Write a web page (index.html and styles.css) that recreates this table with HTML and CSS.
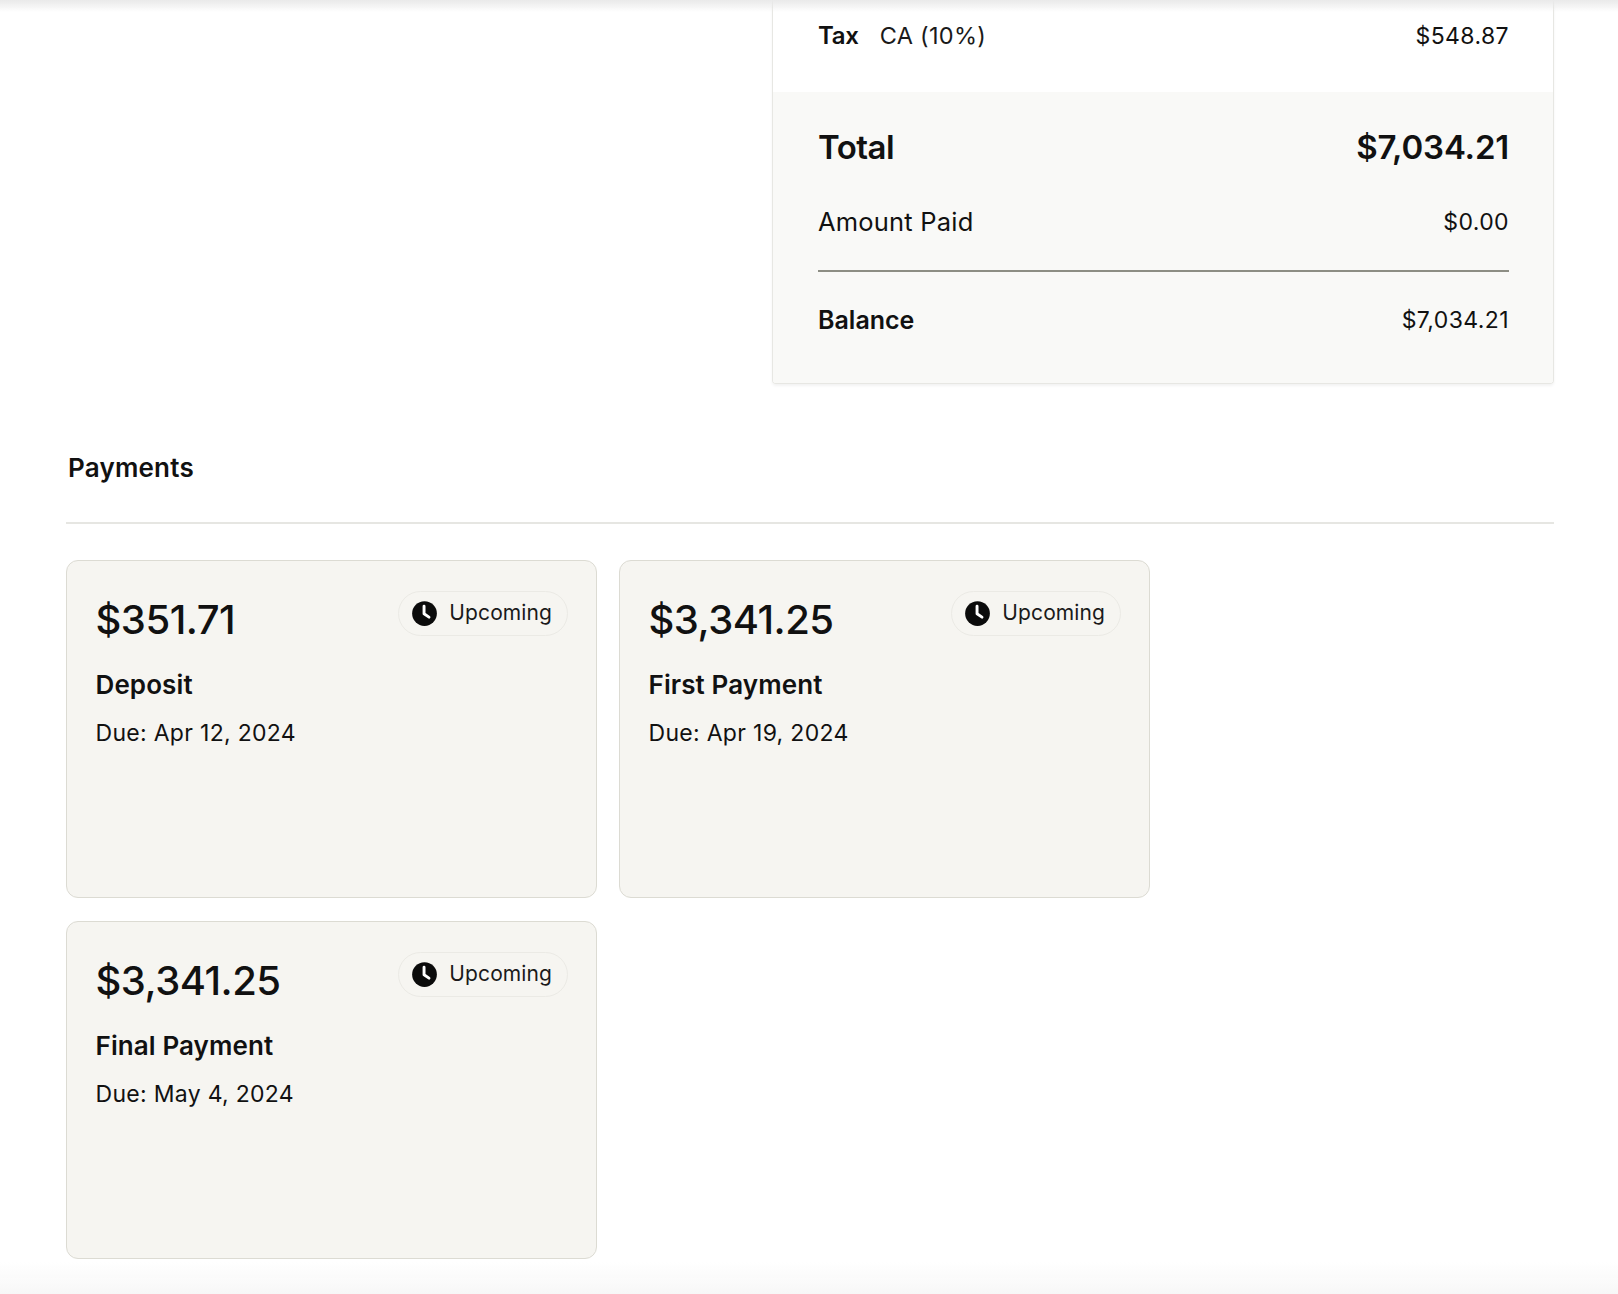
FILE: index.html
```html
<!DOCTYPE html>
<html lang="en">
<head>
<meta charset="utf-8">
<title>Invoice</title>
<link rel="stylesheet" href="styles.css">
</head>
<body>
<div class="top-shade"></div>
<main class="page">
  <section class="summary">
    <div class="summary-top">
      <div class="row">
        <div class="label-group"><span class="label-strong">Tax</span><span class="label-sub">CA (10%)</span></div>
        <span class="value">$548.87</span>
      </div>
    </div>
    <div class="summary-bottom">
      <div class="row total-row">
        <span class="total-label">Total</span>
        <span class="total-value">$7,034.21</span>
      </div>
      <div class="row paid-row">
        <span class="paid-label">Amount Paid</span>
        <span class="value">$0.00</span>
      </div>
      <div class="summary-divider"></div>
      <div class="row balance-row">
        <span class="balance-label">Balance</span>
        <span class="value">$7,034.21</span>
      </div>
    </div>
  </section>

  <section class="payments">
    <h2 class="payments-title">Payments</h2>
    <div class="payments-divider"></div>
    <div class="cards">
      <article class="pay-card">
        <div class="pay-head">
          <span class="pay-amount">$351.71</span>
          <span class="pill">
            <svg class="clock" viewBox="0 0 24 24" aria-hidden="true"><circle cx="12" cy="12" r="11" fill="#0b0b0b"/><path d="M11.6 5.6V12.2L16 15.2" fill="none" stroke="#fff" stroke-width="2.6" stroke-linecap="round" stroke-linejoin="round"/></svg>
            <span class="pill-text">Upcoming</span>
          </span>
        </div>
        <div class="pay-name">Deposit</div>
        <div class="pay-due">Due: Apr 12, 2024</div>
      </article>
      <article class="pay-card">
        <div class="pay-head">
          <span class="pay-amount">$3,341.25</span>
          <span class="pill">
            <svg class="clock" viewBox="0 0 24 24" aria-hidden="true"><circle cx="12" cy="12" r="11" fill="#0b0b0b"/><path d="M11.6 5.6V12.2L16 15.2" fill="none" stroke="#fff" stroke-width="2.6" stroke-linecap="round" stroke-linejoin="round"/></svg>
            <span class="pill-text">Upcoming</span>
          </span>
        </div>
        <div class="pay-name">First Payment</div>
        <div class="pay-due">Due: Apr 19, 2024</div>
      </article>
      <article class="pay-card">
        <div class="pay-head">
          <span class="pay-amount">$3,341.25</span>
          <span class="pill">
            <svg class="clock" viewBox="0 0 24 24" aria-hidden="true"><circle cx="12" cy="12" r="11" fill="#0b0b0b"/><path d="M11.6 5.6V12.2L16 15.2" fill="none" stroke="#fff" stroke-width="2.6" stroke-linecap="round" stroke-linejoin="round"/></svg>
            <span class="pill-text">Upcoming</span>
          </span>
        </div>
        <div class="pay-name">Final Payment</div>
        <div class="pay-due">Due: May 4, 2024</div>
      </article>
    </div>
  </section>
</main>
<div class="bottom-shade"></div>
</body>
</html>
```

FILE: styles.css
```css
* { box-sizing: border-box; }

html, body {
  margin: 0;
  padding: 0;
  background: #ffffff;
}

body {
  font-family: Inter, "Noto Sans", "Liberation Sans", sans-serif;
  color: #111111;
  -webkit-font-smoothing: antialiased;
}

.top-shade {
  position: fixed;
  top: 0;
  left: 0;
  right: 0;
  height: 12px;
  background: linear-gradient(#e9e9e9, rgba(255,255,255,0));
  pointer-events: none;
  z-index: 5;
}

.bottom-shade {
  position: fixed;
  bottom: 0;
  left: 0;
  right: 0;
  height: 32px;
  background: linear-gradient(rgba(248,248,248,0), #f7f7f7);
  pointer-events: none;
  z-index: 5;
}

.page {
  padding: 0 64px 0 66px;
}

/* Summary card */
.summary {
  width: 782px;
  margin-left: auto;
  border: 1.5px solid #e7e7e3;
  border-top: none;
  border-radius: 0 0 4px 4px;
  box-shadow: 0 2px 3px rgba(0, 0, 0, 0.05);
  overflow: hidden;
}

.summary-top {
  height: 92px;
  padding: 20px 44px 0 45px;
  background: #ffffff;
}

.summary-bottom {
  background: #f9f9f7;
  padding: 35px 44px 47px 45px;
}

.row {
  display: flex;
  justify-content: space-between;
  align-items: center;
}

.label-group {
  display: flex;
  align-items: center;
  gap: 21px;
}

.label-strong {
  font-size: 24px;
  line-height: 32px;
  font-weight: 600;
  letter-spacing: -0.3px;
}

.label-sub {
  font-size: 23.5px;
  line-height: 32px;
  font-weight: 400;
  color: #1a1a1a;
  letter-spacing: 0.3px;
}

.value {
  font-size: 23px;
  line-height: 32px;
  font-weight: 400;
  letter-spacing: 0.4px;
}

.total-row {
  height: 40px;
}

.total-label {
  font-size: 33px;
  line-height: 40px;
  font-weight: 600;
  letter-spacing: -0.5px;
}

.total-value {
  font-size: 33px;
  line-height: 40px;
  font-weight: 600;
  letter-spacing: -0.2px;
}

.paid-row {
  margin-top: 39px;
}

.paid-label {
  font-size: 25.5px;
  line-height: 32px;
  font-weight: 400;
  letter-spacing: 0.2px;
}

.balance-label {
  font-size: 25px;
  line-height: 32px;
  font-weight: 600;
  letter-spacing: 0;
}

.summary-divider {
  height: 2px;
  background: #8d8e84;
  margin-top: 32px;
}

.balance-row {
  margin-top: 32px;
}

/* Payments */
.payments {
  margin-top: 68px;
}

.payments-title {
  margin: 0;
  padding-left: 2px;
  font-size: 26px;
  line-height: 32px;
  font-weight: 600;
  letter-spacing: 0.2px;
}

.payments-divider {
  height: 1.5px;
  background: #e6e6e2;
  margin-top: 38px;
}

.cards {
  display: flex;
  flex-wrap: wrap;
  gap: 23px 22px;
  margin-top: 36px;
  padding-bottom: 60px;
}

.pay-card {
  width: 531px;
  height: 338px;
  background: #f6f5f1;
  border: 1.5px solid #dcdbd3;
  border-radius: 12px;
  padding: 30px 28px 28px 28.5px;
}

.pay-head {
  display: flex;
  justify-content: space-between;
  align-items: flex-start;
}

.pay-amount {
  margin-top: 4px;
  font-size: 40px;
  line-height: 50px;
  font-weight: 500;
  letter-spacing: -0.5px;
}

.pill {
  display: inline-flex;
  align-items: center;
  gap: 11px;
  height: 45px;
  padding: 0 15px 0 12px;
  border: 1.5px solid #ebeae5;
  border-radius: 23px;
  background: #f6f5f1;
}

.clock {
  width: 27px;
  height: 27px;
  display: block;
}

.pill-text {
  font-size: 21px;
  line-height: 24px;
  font-weight: 400;
  color: #1a1a1a;
  letter-spacing: 0.1px;
}

.pay-name {
  margin-top: 24px;
  font-size: 26px;
  line-height: 32px;
  font-weight: 600;
  letter-spacing: 0.1px;
}

.pay-due {
  margin-top: 18px;
  font-size: 23px;
  line-height: 28px;
  font-weight: 400;
  letter-spacing: 0.3px;
}
```
